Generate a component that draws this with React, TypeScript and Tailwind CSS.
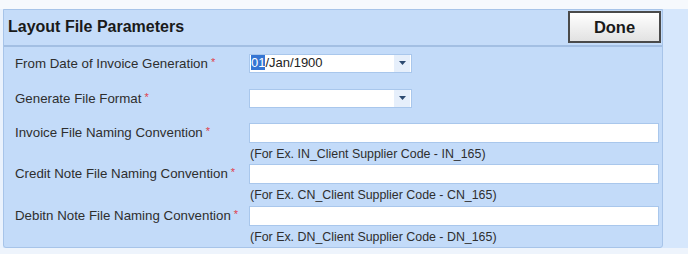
import { ReactNode } from 'react';

function Req() {
  return <span className="text-[#e0404a] text-[11px] ml-[3px] relative top-[-2px]">*</span>;
}

function Combo({ value }: { value?: ReactNode }) {
  return (
    <div className="w-[163px] h-[19px] bg-white border border-[#a9c7ec] flex items-center">
      <div className="flex-1 pl-[1px] text-[13px] text-[#222]">{value}</div>
      <div className="w-[16px] h-[17px] bg-[#e6effb] flex items-center justify-center mr-[1px]">
        <svg width="7" height="4" viewBox="0 0 7 4">
          <path d="M0 0h7L3.5 4z" fill="#2c4a70" />
        </svg>
      </div>
    </div>
  );
}

function TextRow({ label, hint }: { label: string; hint: string }) {
  return (
    <div className="flex">
      <div className="w-[234px] text-[13.3px] text-[#2e2e2e]">
        {label}
        <Req />
      </div>
      <div className="flex-1">
        <div className="h-[20px] bg-white border border-[#a9c7ec]" />
        <div className="pl-[1px] h-[21.5px] pt-[2px] text-[12.4px] text-[#2e2e2e]">{hint}</div>
      </div>
    </div>
  );
}

export default function App() {
  return (
    <div className="w-[688px] h-[254px] overflow-hidden bg-[#d6e7fc] font-['Liberation_Sans',Arial,sans-serif] flex flex-col">
      <div className="h-[9px] bg-[#f6f9fd] shrink-0" />
      <div className="flex flex-1 min-h-0">
        <div className="w-[3px] bg-[#eaf2fd]" />
        <div className="w-[660px] h-[239px] bg-[#c3dbf9] border border-[#a7c4e9] rounded-b-[3px] flex flex-col">
          <div className="h-[35px] flex items-center justify-between pl-[4px] pr-[1px] bg-[#c5dcf9]">
            <span className="text-[16px] font-bold text-[#1a1a1a]">Layout File Parameters</span>
            <button className="w-[93px] h-[32px] border-2 border-[#4a4a4a] bg-gradient-to-b from-white to-[#e2e2e2] text-[16.5px] font-bold text-[#1a1a1a]">
              Done
            </button>
          </div>
          <div className="h-[2px] bg-[#a3bfe3]" />
          <div className="pl-[11px] pr-[3px] pt-[7px] flex flex-col">
            <div className="flex items-center h-[19px]">
              <div className="w-[234px] text-[13.3px] text-[#2e2e2e] pt-[2px]">
                From Date of Invoice Generation
                <Req />
              </div>
              <Combo
                value={
                  <span>
                    <span className="bg-[#3575d3] text-white">01</span>/Jan/1900
                  </span>
                }
              />
            </div>
            <div className="flex items-center h-[19px] mt-[16px]">
              <div className="w-[234px] text-[13.3px] text-[#2e2e2e] pt-[2px]">
                Generate File Format
                <Req />
              </div>
              <Combo />
            </div>
            <div className="mt-[15px] flex flex-col">
              <TextRow label="Invoice File Naming Convention" hint="(For Ex. IN_Client Supplier Code - IN_165)" />
              <TextRow label="Credit Note File Naming Convention" hint="(For Ex. CN_Client Supplier Code - CN_165)" />
              <TextRow label="Debitn Note File Naming Convention" hint="(For Ex. DN_Client Supplier Code - DN_165)" />
            </div>
          </div>
        </div>
      </div>
      <div className="h-[6px] shrink-0 bg-[#eef4fc]" />
    </div>
  );
}
